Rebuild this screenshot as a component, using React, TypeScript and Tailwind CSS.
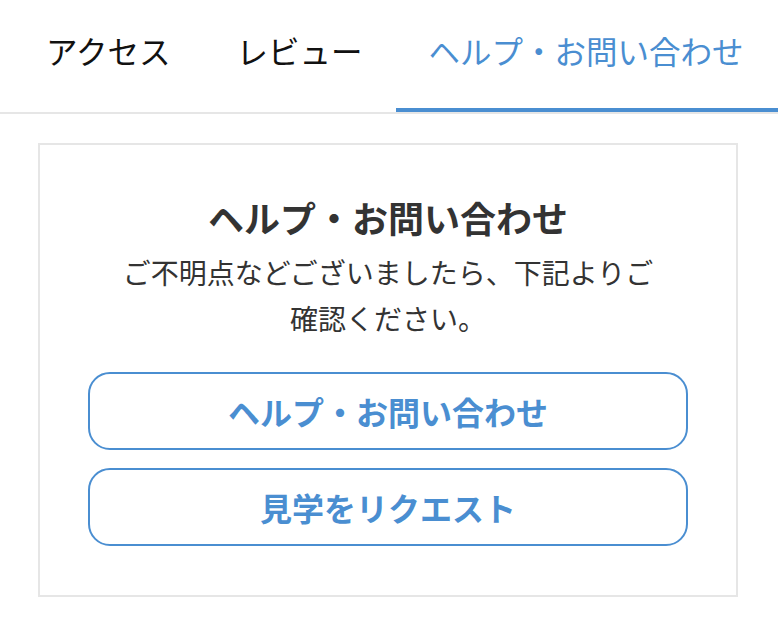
const tabs = [
  { id: 'access', label: 'アクセス' },
  { id: 'review', label: 'レビュー' },
  { id: 'help', label: 'ヘルプ・お問い合わせ' },
];

function TabBar({ active }: { active: string }) {
  return (
    <nav className="flex border-b-2 border-[#e6e6e6] pl-[14px] gap-[2px] overflow-hidden whitespace-nowrap">
      {tabs.map((t) => {
        const on = t.id === active;
        return (
          <div
            key={t.id}
            className={`shrink-0 last:grow px-[32px] pt-[26px] pb-[34px] border-b-4 text-[31.5px] leading-[48px] ${
              on ? 'border-[#4a8ed1] text-[#4a8ed1]' : 'border-transparent text-[#111]'
            }`}
          >
            {t.label}
          </div>
        );
      })}
    </nav>
  );
}

function OutlineButton({ children }: { children: React.ReactNode }) {
  return (
    <button
      type="button"
      className="w-full h-[78px] rounded-[22px] border-2 border-[#4a8ed1] bg-white text-[#4a8ed1] text-[32px] font-bold leading-none"
    >
      {children}
    </button>
  );
}

export default function App() {
  return (
    <div
      className="w-[778px] h-[626px] bg-white overflow-hidden"
      style={{ fontFamily: '"Noto Sans CJK JP", "Noto Sans", sans-serif' }}
    >
      <TabBar active="help" />
      <section className="ml-[38px] mt-[29px] w-[700px] border-2 border-[#e6e6e6] px-[48px] pt-[47px] pb-[49px] text-center text-[#333]">
        <h2 className="text-[36px] font-bold leading-[50px]">ヘルプ・お問い合わせ</h2>
        <p className="mx-auto mt-[7px] max-w-[540px] text-[28px] leading-[46px]">
          ご不明点などございましたら、下記よりご確認ください。
        </p>
        <div className="mt-[31px] flex flex-col gap-[18px]">
          <OutlineButton>ヘルプ・お問い合わせ</OutlineButton>
          <OutlineButton>見学をリクエスト</OutlineButton>
        </div>
      </section>
    </div>
  );
}
